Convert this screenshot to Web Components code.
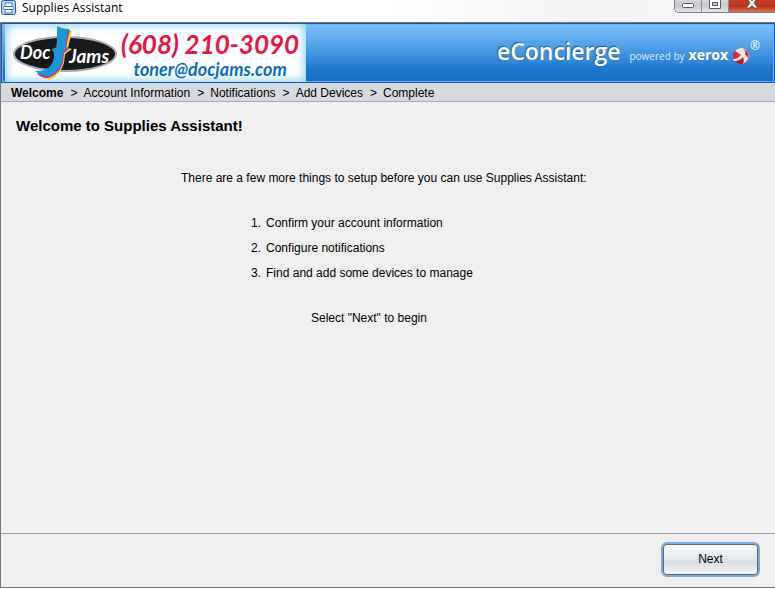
<!DOCTYPE html>
<html lang="en">
<head>
<meta charset="utf-8">
<title>Supplies Assistant</title>
<style>
  html, body { height: 100%; }
  body {
    margin: 0;
    font: 12px/15px "Liberation Sans", Arial, sans-serif;
    color: #000;
    background: #fff;
  }
</style>
</head>
<body>
<assistant-window>
  <title-bar slot="title">Supplies Assistant</title-bar>
  <brand-banner slot="banner"></brand-banner>
  <step-trail slot="steps" current="0">
    <span>Welcome</span>
    <span>Account Information</span>
    <span>Notifications</span>
    <span>Add Devices</span>
    <span>Complete</span>
  </step-trail>
  <welcome-page>
    <span slot="heading">Welcome to Supplies Assistant!</span>
    <span slot="intro">There are a few more things to setup before you can use Supplies Assistant:</span>
    <span slot="hint">Select "Next" to begin</span>
  </welcome-page>
  <wizard-button slot="actions">Next</wizard-button>
</assistant-window>

<template id="window-template">
  <style>
    :host {
      display: flex;
      flex-direction: column;
      box-sizing: border-box;
      min-height: 100vh;
      padding-bottom: 1px;
    }
    .frame {
      flex: 1;
      display: flex;
      flex-direction: column;
      border: 1px solid #777;
      border-right: 0;
      background: #efefef;
    }
    main { flex: 1; }
    footer {
      display: flex;
      justify-content: flex-end;
      padding: 8px 15px 10px;
      border-top: 1px solid #9a9da3;
    }
  </style>
  <slot name="title"></slot>
  <div class="frame">
    <slot name="banner"></slot>
    <slot name="steps"></slot>
    <main><slot></slot></main>
    <footer><slot name="actions"></slot></footer>
  </div>
</template>

<template id="title-template">
  <style>
    :host {
      display: flex;
      align-items: flex-start;
      height: 22px;
      overflow: hidden;
      background: linear-gradient(90deg, #fff 50%, #f3f3f3 75%, #fafafa);
      font: 12px/16px "Open Sans", "Noto Sans", sans-serif;
    }
    .icon { display: block; margin-right: 5px; }
    .label { flex: 1; }
    .controls {
      display: flex;
      height: 13px;
      box-sizing: border-box;
      border: 1px solid #7b7d84;
      border-top: 0;
      border-right: 0;
      border-radius: 0 0 0 5px;
      overflow: hidden;
    }
    button {
      width: 27px;
      padding: 0;
      border: 0;
      border-right: 1px solid #8c8e94;
      background: linear-gradient(#d6d8da, #c4c7ca 40%, #e3e4e6);
    }
    button.close {
      width: 46px;
      border-right: 0;
      background: linear-gradient(#c2412c, #b8331b 50%, #dc7053);
    }
    button svg { display: block; margin: 0 auto; }
  </style>
  <svg class="icon" width="17" height="16" viewBox="0 0 17 16">
    <rect x="1.500" y=".5" width="14" height="14" rx="2" fill="#b9d5f2" stroke="#2560b4"/>
    <path d="M5 6V3h7v3M5 9v4h7V9" fill="#fff" stroke="#4a86c4"/>
    <rect x="3.500" y="6.500" width="10" height="3" rx="1" fill="#fff" stroke="#3d7ac0"/>
  </svg>
  <span class="label"><slot></slot></span>
  <div class="controls">
    <button type="button" aria-label="Minimize">
      <svg width="14" height="12"><rect x="1.500" y="3.500" width="11" height="4" rx="1" fill="#fff" stroke="#555a68"/></svg>
    </button>
    <button type="button" aria-label="Maximize">
      <svg width="14" height="12"><path d="M1.500-2h11V8.500h-11z" fill="#fff" stroke="#555a68"/><rect x="4.500" y="2.500" width="5" height="3" fill="#ccc" stroke="#555a68"/></svg>
    </button>
    <button type="button" class="close" aria-label="Close">
      <svg width="16" height="12"><path d="M3-2h3l2 3 2-3h3l-3 5 4 5h-4L8 5.500 6 8H2l4-5z" fill="#fff" stroke="#505566"/></svg>
    </button>
  </div>
</template>

<template id="banner-template">
  <style>
    :host {
      display: flex;
      justify-content: space-between;
      align-items: stretch;
      height: 58px;
      border: 1px solid #1557b8;
      background: linear-gradient(#7dc0fc, #4f9fe6 40%, #1e75cc 80%, #1a6cc2);
      box-shadow: inset 0 0 0 1px #6cb2f2;
    }
    .dealer {
      display: flex;
      align-items: center;
      gap: 2px;
      width: 301px;
      margin-left: 3px;
      background: #fff;
      box-shadow: inset 0 0 9px 2px #8fd2f3;
    }
    .dealer svg { display: block; flex: none; margin-left: 6px; }
    .contact {
      display: grid;
      font-family: Lato, "Open Sans", sans-serif;
      font-style: italic;
      font-weight: 700;
      white-space: nowrap;
    }
    .phone { font-size: 26px; line-height: 32px; color: #e5173f; }
    .mail {
      justify-self: center;
      font-size: 18px;
      line-height: 18px;
      color: #0c6db5;
      text-decoration: none;
    }
    .product {
      display: flex;
      align-items: baseline;
      padding: 9px 14px 0 0;
      color: #fff;
      font-family: "Open Sans", "Noto Sans", sans-serif;
      white-space: nowrap;
    }
    .name {
      font-size: 23px;
      line-height: 36px;
      font-weight: 600;
      text-shadow: -1px -1px 1px #2a5f96;
    }
    .powered { margin-left: 9px; font-size: 10px; color: #d9ecfb; }
    .xerox { margin-left: 4px; font-size: 14px; font-weight: 700; }
    .ball { align-self: flex-start; margin: 14px 0 0 4px; }
    .reg { align-self: flex-start; font-size: 12px; line-height: 16px; margin-top: 5px; }
  </style>
  <div class="dealer">
    <svg width="108" height="56" viewBox="0 0 108 56">
      <ellipse cx="54" cy="29" rx="52" ry="18" fill="#a8acb0"/>
      <ellipse cx="54" cy="29" rx="50" ry="16" fill="#17191b"/>
      <path d="M50 5l11 1-4 17 4 1-7 5-1 9c-2 6-6 12-12 16-4 1-8 0-13-4l14-8z" fill="#f6df20"/>
      <path d="M48 4l11 1-4 18h4l-6 5-1 10c-2 6-6 11-12 14-4 2-9 1-14-3l16-8z" fill="#d8278f"/>
      <path d="M46 1c4 2 8 3 12 3l-4 18h4l-6 5-1 11c-3 6-6 9-10 12-5 3-12 0-17-4 8 0 13-2 16-6 4-6 4-11 1-16l5-2z" fill="#1899d6"/>
      <g fill="#fff" font-family="Lato, Open Sans, sans-serif" font-weight="700" font-style="italic">
        <text x="9" y="34" font-size="18">Doc</text>
        <text x="58" y="38" font-size="19">Jams</text>
      </g>
    </svg>
    <div class="contact">
      <span class="phone">(608) 210-3090</span>
      <a class="mail" href="mailto:toner@docjams.com">toner@docjams.com</a>
    </div>
  </div>
  <div class="product">
    <span class="name">eConcierge</span>
    <span class="powered">powered by</span>
    <span class="xerox">xerox</span>
    <svg class="ball" width="18" height="18" viewBox="0 0 18 18">
      <defs>
        <radialGradient id="shade" cx="35%" cy="40%"><stop offset="0" stop-color="#ee3f36"/><stop offset="1" stop-color="#c0141f"/></radialGradient>
      </defs>
      <circle cx="9" cy="9" r="8" fill="url(#shade)"/>
      <path d="M3 4C6 0 13 0 15 4c3 4 2 8-1 11l-3 2c1-3 1-5 0-7-2 2-4 4-9 4l-1-2c4 0 6-2 8-4-2-2-4-3-6-4z" fill="#e4eaf0"/>
      <path d="M11 2c2 1 3 3 2 5l3 4c1-4 0-7-5-9z" fill="#d3222b"/>
    </svg>
    <span class="reg">®</span>
  </div>
</template>

<template id="trail-template">
  <style>
    :host {
      display: block;
      border-bottom: 1px solid #a9acb4;
      background: #d6d9e0;
    }
    ol {
      display: flex;
      gap: 7px;
      margin: 0;
      padding: 3px 10px 0;
      list-style: none;
    }
    li { display: flex; gap: 6px; }
    li + li::before { content: ">"; }
    .current { font-weight: bold; }
  </style>
  <nav aria-label="Setup steps"><ol></ol></nav>
</template>

<template id="welcome-template">
  <style>
    :host { display: block; padding: 15px; }
    h1 { margin: 0; font-size: 15px; line-height: 18px; }
    .body { width: 414px; max-width: 100%; margin: 36px auto 0; }
    p { margin: 0; }
    ol {
      display: grid;
      gap: 10px;
      margin: 30px 0 30px 70px;
      padding: 0;
      list-style: none;
      counter-reset: task;
    }
    li { display: flex; gap: 5px; counter-increment: task; }
    li::before { content: counter(task) "."; }
    .hint { margin-left: 130px; }
  </style>
  <h1><slot name="heading"></slot></h1>
  <div class="body">
    <p><slot name="intro"></slot></p>
    <ol>
      <li>Confirm your account information</li>
      <li>Configure notifications</li>
      <li>Find and add some devices to manage</li>
    </ol>
    <p class="hint"><slot name="hint"></slot></p>
  </div>
</template>

<template id="button-template">
  <style>
    :host { display: block; }
    button {
      display: block;
      min-width: 99px;
      height: 35px;
      padding: 0 16px;
      border: 2px solid #7fa9d4;
      border-radius: 6px;
      background: linear-gradient(#fbfbfc, #e4e7ec 45%, #d8dce4 60%, #f6f8fb);
      box-shadow: inset 0 0 0 1px #5d6877;
      font: inherit;
      color: inherit;
    }
  </style>
  <button type="button"><slot></slot></button>
</template>

<script>
class BaseElement extends HTMLElement {
  constructor(templateId) {
    super();
    const template = document.getElementById(templateId);
    this.attachShadow({ mode: 'open' }).appendChild(template.content.cloneNode(true));
  }
}

class AssistantWindow extends BaseElement {
  constructor() { super('window-template'); }
}

class TitleBar extends BaseElement {
  constructor() { super('title-template'); }
}

class BrandBanner extends BaseElement {
  constructor() { super('banner-template'); }
}

class StepTrail extends BaseElement {
  constructor() { super('trail-template'); }

  connectedCallback() {
    const list = this.shadowRoot.querySelector('ol');
    const current = parseInt(this.getAttribute('current')) || 0;
    list.innerHTML = '';

    // one list item and one named slot for each step
    [...this.children].forEach((step, i) => {
      step.slot = 'step' + i;
      const item = document.createElement('li');
      const slot = document.createElement('slot');
      slot.name = step.slot;
      if (i === current) {
        item.className = 'current';
        item.setAttribute('aria-current', 'step');
      }
      item.appendChild(slot);
      list.appendChild(item);
    });
  }
}

class WelcomePage extends BaseElement {
  constructor() { super('welcome-template'); }
}

class WizardButton extends BaseElement {
  constructor() { super('button-template'); }
}

customElements.define('assistant-window', AssistantWindow);
customElements.define('title-bar', TitleBar);
customElements.define('brand-banner', BrandBanner);
customElements.define('step-trail', StepTrail);
customElements.define('welcome-page', WelcomePage);
customElements.define('wizard-button', WizardButton);
</script>
</body>
</html>
